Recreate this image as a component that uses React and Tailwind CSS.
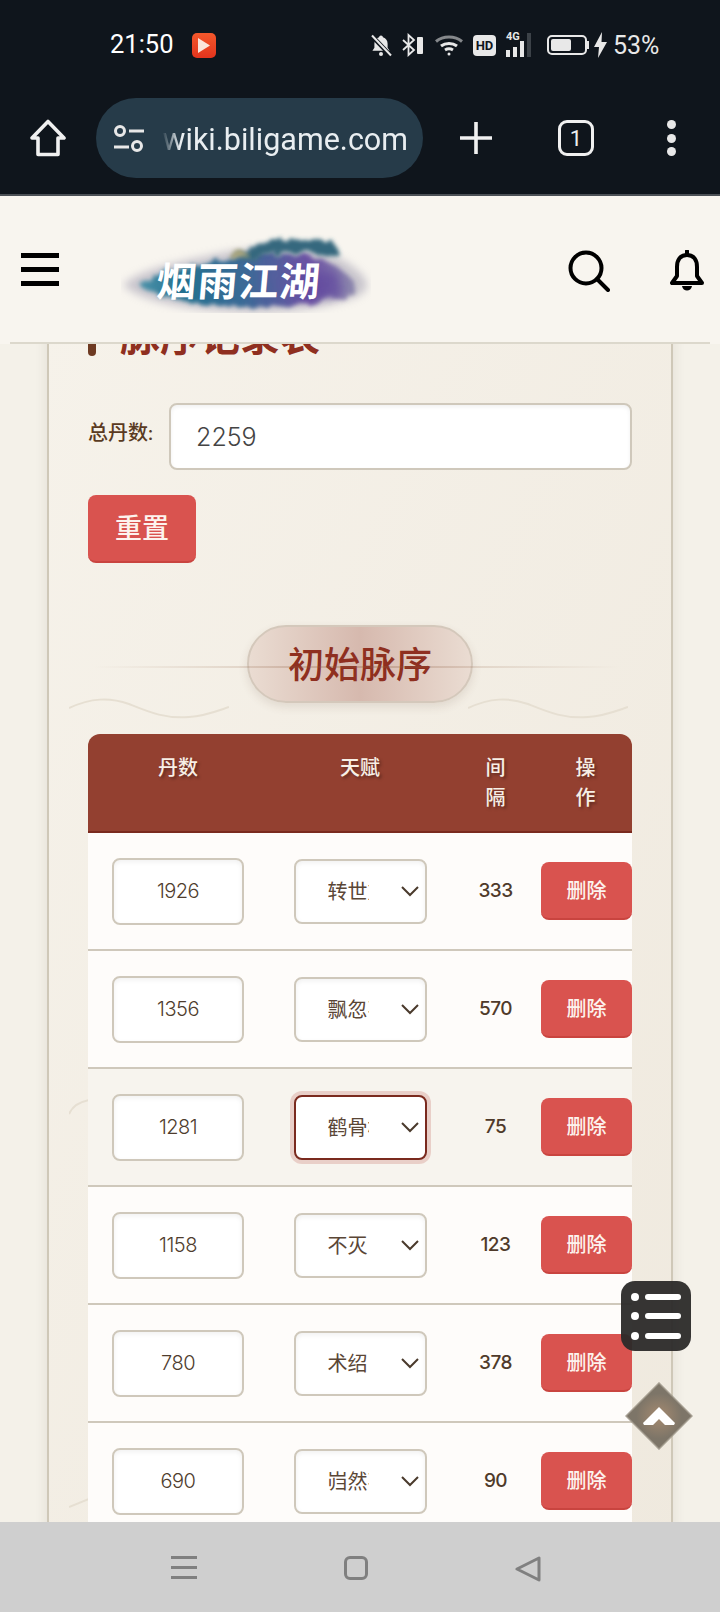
import { useState } from "react";

const ROWS = [
    { dan: 1926, name: '转世重生', gap: 333 },
    { dan: 1356, name: '飘忽不定', gap: 570 },
    { dan: 1281, name: '鹤骨松姿', gap: 75, active: true },
    { dan: 1158, name: '不灭', gap: 123 },
    { dan: 780, name: '术绍', gap: 378 },
    { dan: 690, name: '岿然不动', gap: 90 },
];

function StatusIcons() {
    return (
        <div className="flex items-center text-[#e8e8e8]">
            <svg width="24" height="24" viewBox="0 0 24 24" className="ml-[369px]">
                <path d="M12 2.5a2 2 0 0 1 2 1.7c3 .9 4.6 3.4 4.6 6.6v4l2 3H3.4l2-3v-4c0-3.2 1.600-5.700 4.600-6.600A2 2 0 0 1 12 2.500z" fill="#e8e8e8" />
                <circle cx="12" cy="21" r="2" fill="#e8e8e8" />
                <path d="M3 3l18 19" stroke="#0f151c" strokeWidth="4.500" />
                <path d="M3 2.500l19 20" stroke="#e8e8e8" strokeWidth="2" />
            </svg>
            <svg width="24" height="24" viewBox="0 0 24 24" className="ml-[8px]" fill="none">
                <path d="M2 7l11 10-5.500 5V2L13 7 2 17" stroke="#e8e8e8" strokeWidth="1.800" />
                <rect x="16" y="4" width="6" height="17" rx="1" fill="#e8e8e8" />
            </svg>
            <svg width="30" height="24" viewBox="0 0 30 24" className="ml-[9px]" fill="none" stroke="#e8e8e8" strokeWidth="3">
                <path d="M2 8.500c7-6 19-6 26 0" opacity=".55" />
                <path d="M7 13c4.500-3.500 11.500-3.500 16 0" />
                <path d="M11 17c2.500-1.500 5.500-1.500 8 0" />
                <circle cx="15" cy="21" r="1.500" fill="#e8e8e8" stroke="none" />
            </svg>
            <span className="ml-[9px] w-[23px] h-[21px] rounded-[4px] bg-[#e8e8e8] text-[#0f151c] text-[13px] leading-[21px] font-bold text-center font-['Roboto',sans-serif]">HD</span>
            <div className="relative ml-[10px] w-[30px] h-[24px]">
                <span className="absolute left-0 top-[-2px] text-[11px] leading-[12px] font-bold font-['Roboto',sans-serif]">4G</span>
                <div className="absolute left-0 bottom-0 flex items-end gap-[3px]">
                    <span className="w-[4px] h-[7px] bg-[#e8e8e8]" />
                    <span className="w-[4px] h-[10px] bg-[#e8e8e8]" />
                    <span className="w-[4px] h-[16px] bg-[#e8e8e8]" />
                    <span className="w-[4px] h-[24px] bg-[#3c4248]" />
                </div>
            </div>
            <div className="ml-[11px] w-[40px] h-[20px] rounded-[5px] border-2 border-[#e8e8e8] p-[2px]">
                <div className="w-[20px] h-full rounded-[2px] bg-[#e8e8e8]" />
            </div>
            <span className="w-[2px] h-[8px] bg-[#e8e8e8]" />
            <svg width="13" height="26" viewBox="0 0 13 26" className="ml-[5px]">
                <path d="M8 0L0 15h5l-1 11 9-16H7.500z" fill="#e8e8e8" />
            </svg>
            <span className="ml-[6px] text-[25px] leading-none font-['Roboto',sans-serif]">53%</span>
        </div>
    );
}

function Chrome() {
    return (
        <div className="h-[196px] shrink-0 bg-[#0f151c] border-b-2 border-[#4b5056] font-['Roboto',sans-serif]">
            <div className="h-[90px] flex items-center pl-[110px]">
                <span className="w-[64px] text-[25.500px] leading-none text-white">21:50</span>
                <div className="ml-[18px] w-[24px] h-[25px] rounded-[5px] bg-gradient-to-b from-[#f4572b] to-[#e3331d] flex items-center justify-center">
                    <svg width="14" height="17" viewBox="0 0 14 17"><path d="M1 1l12 7.500L1 16z" fill="#fbe6dc" /></svg>
                </div>
                <div className="-ml-[216px]"><StatusIcons /></div>
            </div>
            <div className="mt-[8px] flex items-center">
                <svg width="38" height="38" viewBox="0 0 38 38" fill="none" stroke="#f0f0f0" strokeWidth="3.600" strokeLinejoin="round" className="ml-[29px]">
                    <path d="M19 2.500L35 19h-6v16.500H9V19H3z" />
                </svg>
                <div className="relative ml-[29px] w-[327px] h-[80px] rounded-full bg-[#263b49] overflow-hidden">
                    <svg width="32" height="28" viewBox="0 0 32 28" fill="none" stroke="#e8e8e8" strokeWidth="3" className="absolute left-[17px] top-[27px]">
                        <circle cx="7" cy="6" r="4.500" />
                        <path d="M16 6h15M1 22h15" />
                        <circle cx="24" cy="21" r="4.500" />
                    </svg>
                    <div className="absolute left-[66px] w-[246px] top-0 h-full pt-[3px] flex items-center justify-end overflow-hidden [mask-image:linear-gradient(90deg,transparent,black_18px)]">
                        <span className="shrink-0 text-[30.500px] text-[#e9eef1] whitespace-nowrap">wiki.biligame.com</span>
                    </div>
                </div>
                <svg width="32" height="32" viewBox="0 0 32 32" stroke="#f0f0f0" strokeWidth="3.600" className="ml-[37px]">
                    <path d="M16 0v32M0 16h32" />
                </svg>
                <div className="ml-[66px] w-[36px] h-[36px] border-[3.500px] border-[#f0f0f0] rounded-[9px] flex items-center justify-center text-[22px] text-[#f0f0f0]">1</div>
                <div className="ml-[73px] flex flex-col gap-[4.500px]">
                    <span className="w-[9px] h-[9px] rounded-full bg-[#e8e8e8]" />
                    <span className="w-[9px] h-[9px] rounded-full bg-[#e8e8e8]" />
                    <span className="w-[9px] h-[9px] rounded-full bg-[#e8e8e8]" />
                </div>
            </div>
        </div>
    );
}

function Logo() {
    return (
        <svg width="250" height="80" viewBox="0 0 250 80" className="ml-[62px] mt-[8px]">
            <defs>
                <linearGradient id="ink" x1="0" x2="1" y1="0" y2="0">
                    <stop offset="0" stopColor="#4d93aa" />
                    <stop offset=".2" stopColor="#23708f" />
                    <stop offset=".48" stopColor="#3a6a96" />
                    <stop offset=".78" stopColor="#6c52a4" />
                    <stop offset="1" stopColor="#8d89ad" />
                </linearGradient>
                <filter id="rough" x="-10%" y="-30%" width="120%" height="160%">
                    <feTurbulence type="fractalNoise" baseFrequency=".08" numOctaves="3" seed="4" />
                    <feDisplacementMap in="SourceGraphic" scale="12" />
                    <feGaussianBlur stdDeviation="2.200" />
                </filter>
                <filter id="halo" x="-10%" y="-30%" width="120%" height="160%">
                    <feGaussianBlur stdDeviation="4.500" />
                </filter>
            </defs>
            <path d="M2 52C22 34 66 28 100 20c40-8 92-8 120 6 14 8 26 18 26 26 0 10-16 14-30 18-30 8-70 11-100 9C70 77 22 70 2 52z" fill="#a9a5b6" opacity=".6" filter="url(#halo)" />
            <path d="M18 52C36 38 74 34 104 26c36-8 84-8 106 4 12 8 24 16 24 24 0 8-16 10-28 13-30 6-66 8-94 6C76 71 36 66 18 52z" fill="url(#ink)" filter="url(#rough)" />
            <path d="M116 22l14-10 36-6 46 2 8 16-54-6-24 6-18 5z" fill="#36687e" filter="url(#rough)" />
            <path d="M106 22l14-6 8 6-14 6z" fill="#a8a47c" filter="url(#rough)" />
            <path d="M176 36l40 4 6 22-40 6z" fill="#5a3f9c" opacity=".55" filter="url(#halo)" />
            <text x="30" y="63" transform="skewX(-5) translate(10 0)" fill="#fff" fontSize="40" fontWeight="700" letterSpacing="1" fontFamily="'Noto Sans CJK SC', sans-serif">烟雨江湖</text>
        </svg>
    );
}

function SiteHeader() {
    return (
        <div className="relative z-10 shrink-0 bg-[#f8f5ef]">
            <div className="h-[146px] flex items-center">
                <div className="ml-[21px] w-[38px] flex flex-col gap-[9px]">
                    <span className="h-[5px] bg-black" />
                    <span className="h-[5px] bg-black" />
                    <span className="h-[5px] bg-black" />
                </div>
                <Logo />
                <svg width="42" height="42" viewBox="0 0 42 42" fill="none" stroke="#000" strokeWidth="4" strokeLinecap="round" className="ml-[197px] mt-[3px]">
                    <circle cx="18" cy="18" r="15.500" />
                    <path d="M29 29l11 11" />
                </svg>
                <svg width="36" height="42" viewBox="0 0 36 42" fill="none" stroke="#000" strokeWidth="4" strokeLinejoin="round" className="ml-[59px] mt-[4px]">
                    <path d="M18 5c-7 0-10 5-10 12v9l-5 7h30l-5-7v-9c0-7-3-12-10-12z" />
                    <path d="M18 1v4" strokeLinecap="round" />
                    <path d="M13 36c1 6 9 6 10 0z" fill="#000" stroke="none" />
                </svg>
            </div>
            <div className="mx-[10px] h-[2px] bg-[#dcd8cc]" />
        </div>
    );
}

function Wave({ className }) {
    return (
        <svg width="160" height="22" viewBox="0 0 160 22" fill="none" stroke="#e6dfd2" strokeWidth="2" className={className}>
            <path d="M0 11C22 1 40 0 60 7c20 8 36 15 60 13 16-1 28-6 40-10" />
        </svg>
    );
}

function SectionTitle({ children }) {
    return (
        <div className="relative h-[78px] mt-[62px] flex justify-center">
            <div className="w-[226px] h-[78px] rounded-full border-2 border-[#d4c8bb] bg-gradient-to-r from-[#eadcd2] via-[#d6b9ae] to-[#eadcd2] shadow-[0_4px_10px_rgba(90,60,40,0.12)] flex items-center justify-center text-[36px] leading-none font-medium text-[#8f2f20]">
                {children}
            </div>
            <div className="absolute left-[5px] w-[527px] top-[41px] h-[2px] bg-gradient-to-r from-transparent via-[#8b5a3c4d] to-transparent" />
            <Wave className="absolute left-[-19px] top-[72px]" />
            <Wave className="absolute left-[380px] top-[72px]" />
        </div>
    );
}

function Row({ row, onChange }) {
    return (
        <div className={`grid grid-cols-[180px_184px_87px_93px] items-center h-[118px] border-b-2 border-[#cfc8bb] ${row.active ? 'bg-[#f7f4ee]' : 'bg-[#fefcfa]'}`}>
            <input
                value={row.dan}
                onChange={onChange}
                className="justify-self-center w-[132px] h-[67px] rounded-lg border-2 border-[#cfc8bb] bg-white text-center font-['Inter',sans-serif] font-light text-[20px] tracking-[-0.5px] text-[#4f3d2e] shadow-[inset_0_2px_5px_rgba(0,0,0,0.06)] outline-none"
            />
            <div className="relative justify-self-center">
                <select
                    value={row.name}
                    onChange={onChange}
                    className={`block appearance-none w-[133px] h-[65px] rounded-lg border-2 pl-[32px] pr-[56px] bg-white text-[20px] text-[#5a4636] outline-none ${row.active ? 'border-[#7a2a1e] shadow-[0_0_0_4px_#e9cfc8]' : 'border-[#cfc8bb] shadow-[inset_0_2px_5px_rgba(0,0,0,0.06)]'}`}
                >
                    <option>{row.name}</option>
                </select>
                <svg width="18" height="11" viewBox="0 0 18 11" fill="none" stroke="#4a3a2c" strokeWidth="2" className="absolute right-[8px] top-[27px] pointer-events-none">
                    <path d="M1 1l8 8 8-8" />
                </svg>
            </div>
            <span className="text-center font-['Inter',sans-serif] text-[19px] tracking-[-0.5px] font-medium text-[#4f3a2a]">{row.gap}</span>
            <button className="justify-self-end w-[91px] h-[58px] rounded-lg bg-[#d9534f] border-b-2 border-[#c9443f] text-[20px] font-medium text-[#fdf3ee]">删除</button>
        </div>
    );
}

export default function App() {
    const [total, setTotal] = useState('2259');
    const noop = () => {};

    return (
        <div className="relative h-[1612px] overflow-hidden flex flex-col bg-[#f4f1e9] font-[Lato,'Noto_Sans_CJK_SC',sans-serif]">
            <Chrome />
            <SiteHeader />

            <main className="flex-1 min-h-0">
                <div className="relative ml-[47px] w-[626px] min-h-[1300px] border-x-2 border-[#cfc8b8] px-[39px] bg-gradient-to-br from-[#f6f2ea] to-[#efe9de] shadow-[0_0_12px_rgba(80,60,30,0.1)]">
                    <svg width="20" height="16" viewBox="0 0 20 16" fill="none" stroke="#e6dfd2" strokeWidth="2" className="absolute left-[20px] top-[783px]">
                        <path d="M0 15C3 8 10 3 20 1" />
                    </svg>
                    <svg width="20" height="10" viewBox="0 0 20 10" fill="none" stroke="#e6dfd2" strokeWidth="2" className="absolute left-[20px] top-[1182px]">
                        <path d="M0 9L20 1" />
                    </svg>

                    <h2 className="-mt-[28px] flex items-center h-[40px] text-[40px] leading-none font-bold text-[#8f2f20] relative">
                        <span className="w-[8px] h-[38px] rounded-b-full bg-[#6e3a22] mt-[1px] mr-[24px]" />
                        脉序记录表
                    </h2>

                    <div className="mt-[47px] flex items-center gap-[16px]">
                        <label className="mb-[9px] text-[20px] leading-none font-medium text-[#5a3a22] whitespace-nowrap">总丹数:</label>
                        <input
                            value={total}
                            onChange={e => setTotal(e.target.value)}
                            className="w-[463px] h-[67px] rounded-lg border-2 border-[#cfc8bb] bg-white pl-[25px] font-['Inter',sans-serif] font-light text-[25px] text-[#444] shadow-[inset_0_2px_4px_rgba(0,0,0,0.06)] outline-none"
                        />
                    </div>

                    <button className="mt-[25px] block w-[108px] h-[68px] rounded-lg bg-[#d9534f] border-b-2 border-[#c9443f] text-[27px] font-medium text-[#fdf3ee]">重置</button>

                    <SectionTitle>初始脉序</SectionTitle>

                    <div className="relative mt-[31px] rounded-t-xl overflow-hidden">
                        <div className="grid grid-cols-[180px_184px_87px_93px] h-[99px] pt-[18px] bg-[#934030] border-b-2 border-[#7a2a1e] text-center text-[20px] leading-[30px] font-medium text-[#f7efe6] [text-shadow:2px_2px_3px_rgba(0,0,0,0.35)]">
                            <div>丹数</div>
                            <div>天赋</div>
                            <div>间<br />隔</div>
                            <div>操<br />作</div>
                        </div>
                        {ROWS.map(row => <Row key={row.dan} row={row} onChange={noop} />)}
                    </div>
                </div>
            </main>

            <nav className="relative z-10 h-[90px] shrink-0 bg-[#cfcfcf] flex items-start pt-[34px]">
                <div className="ml-[171px] w-[26px] h-[23px] flex flex-col justify-between">
                    <span className="h-[3px] bg-[#808080]" />
                    <span className="h-[3px] bg-[#808080]" />
                    <span className="h-[3px] bg-[#808080]" />
                </div>
                <div className="ml-[147px] w-[24px] h-[24px] rounded-[6px] border-[3px] border-[#808080]" />
                <svg width="26" height="26" viewBox="0 0 26 26" fill="none" stroke="#808080" strokeWidth="3" strokeLinejoin="round" className="ml-[147px]">
                    <path d="M24 2v22L2 13z" />
                </svg>
            </nav>

            <div className="absolute left-[621px] top-[1281px] z-20 w-[70px] h-[70px] rounded-[14px] bg-[#2b2a29f2] flex flex-col justify-center gap-[11.500px] pl-[10px]">
                {[0, 1, 2].map(i => (
                    <div key={i} className="flex items-center gap-[6px]">
                        <span className="w-[8px] h-[8px] rounded-full bg-white" />
                        <span className="w-[36px] h-[6px] rounded-full bg-white" />
                    </div>
                ))}
            </div>

            <div className="absolute left-[635px] top-[1392px] z-20 w-[48px] h-[48px] rotate-45 bg-[radial-gradient(circle,#a58a70,#7d7568_70%)] border border-[#9c9587] flex items-center justify-center">
                <svg width="32" height="18" viewBox="0 0 32 18" className="-rotate-45">
                    <path d="M16 0l16 16-1 2H22l-6-6-6 6H1l-1-2z" fill="#fff" />
                </svg>
            </div>
        </div>
    );
}
